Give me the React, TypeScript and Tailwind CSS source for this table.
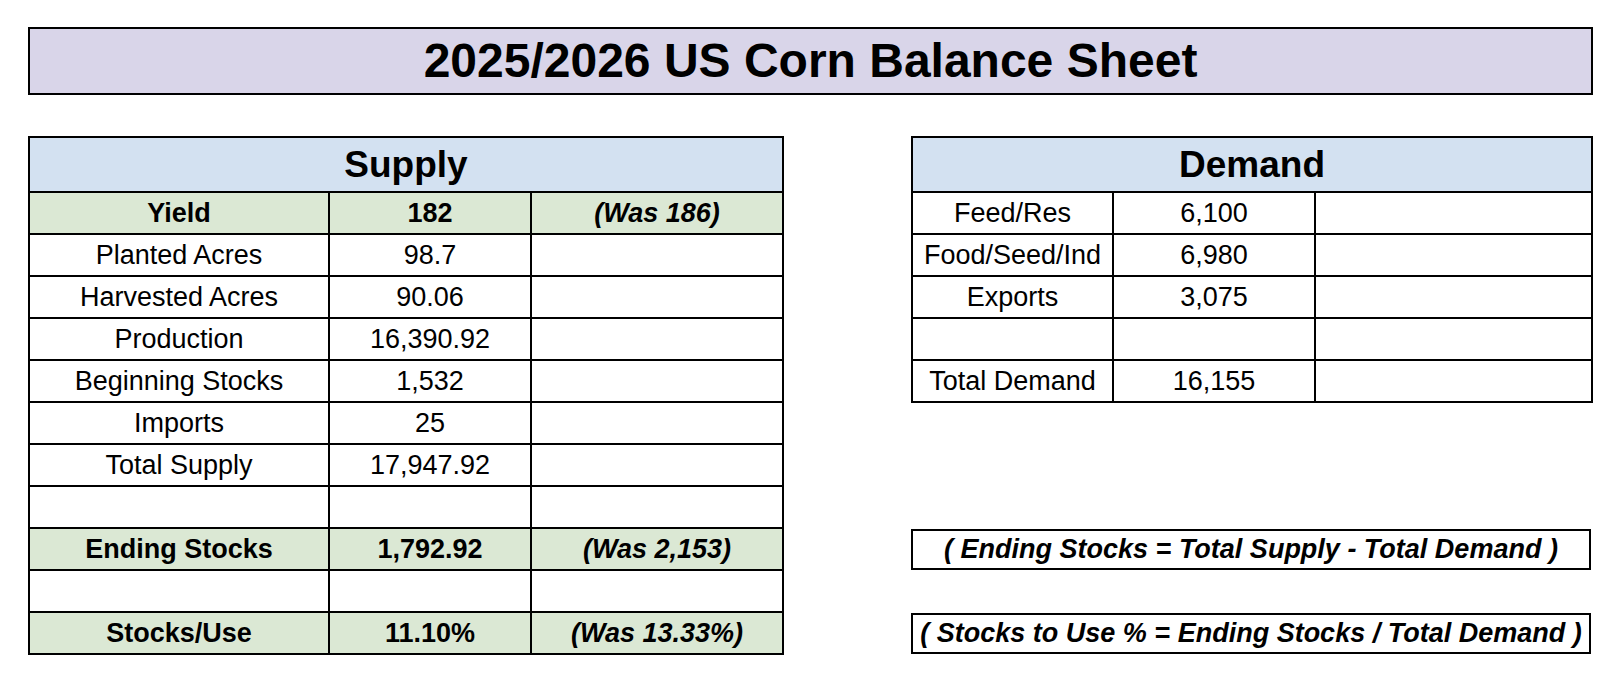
import React from "react";

type Row = {
  label: string;
  value: string;
  note: string;
  highlight?: boolean;
};

const supplyRows: Row[] = [
  { label: "Yield", value: "182", note: "(Was 186)", highlight: true },
  { label: "Planted Acres", value: "98.7", note: "" },
  { label: "Harvested Acres", value: "90.06", note: "" },
  { label: "Production", value: "16,390.92", note: "" },
  { label: "Beginning Stocks", value: "1,532", note: "" },
  { label: "Imports", value: "25", note: "" },
  { label: "Total Supply", value: "17,947.92", note: "" },
  { label: "", value: "", note: "" },
  { label: "Ending Stocks", value: "1,792.92", note: "(Was 2,153)", highlight: true },
  { label: "", value: "", note: "" },
  { label: "Stocks/Use", value: "11.10%", note: "(Was 13.33%)", highlight: true },
];

const demandRows: Row[] = [
  { label: "Feed/Res", value: "6,100", note: "" },
  { label: "Food/Seed/Ind", value: "6,980", note: "" },
  { label: "Exports", value: "3,075", note: "" },
  { label: "", value: "", note: "" },
  { label: "Total Demand", value: "16,155", note: "" },
];

type TableProps = {
  title: string;
  rows: Row[];
  widths: number[];
  total: number;
};

function BalanceTable({ title, rows, widths, total }: TableProps) {
  return (
    <table className="border-collapse table-fixed" style={{ width: total }}>
      <colgroup>
        {widths.map((w, i) => (
          <col key={i} style={{ width: w }} />
        ))}
      </colgroup>
      <thead>
        <tr className="h-[55px] bg-[#d3e1f1]">
          <th colSpan={3} className="border-2 border-black text-[37px] font-bold leading-none p-0">
            {title}
          </th>
        </tr>
      </thead>
      <tbody>
        {rows.map((row, i) => (
          <tr
            key={i}
            className={`h-[42px] ${row.highlight ? "bg-[#dbe8d4] font-bold" : "bg-white"}`}
          >
            <td className="border-2 border-black text-center p-0 leading-none">{row.label}</td>
            <td className="border-2 border-black text-center p-0 leading-none">{row.value}</td>
            <td className="border-2 border-black text-center p-0 leading-none italic">{row.note}</td>
          </tr>
        ))}
      </tbody>
    </table>
  );
}

function FormulaBox({ text }: { text: string }) {
  return (
    <div className="h-[41px] w-[680px] border-2 border-black flex items-center justify-center font-bold italic leading-none">
      {text}
    </div>
  );
}

export default function App() {
  return (
    <div
      className="w-[1617px] h-[695px] bg-white text-black text-[27px] pl-[28px] pt-[27px]"
      style={{ fontFamily: '"Liberation Sans", Arial, sans-serif' }}
    >
      <div className="w-[1565px] h-[68px] border-2 border-black bg-[#d9d5e9] flex items-center justify-center">
        <h1 className="text-[48px] font-bold leading-none">2025/2026 US Corn Balance Sheet</h1>
      </div>

      <div className="flex gap-[127px] mt-[41px]">
        <BalanceTable title="Supply" rows={supplyRows} widths={[300, 202, 252]} total={754} />

        <div className="flex flex-col">
          <BalanceTable title="Demand" rows={demandRows} widths={[201, 202, 277]} total={680} />
          <div className="mt-[126px] flex flex-col gap-[43px]">
            <FormulaBox text="( Ending Stocks = Total Supply - Total Demand )" />
            <FormulaBox text="( Stocks to Use % = Ending Stocks / Total Demand )" />
          </div>
        </div>
      </div>
    </div>
  );
}
